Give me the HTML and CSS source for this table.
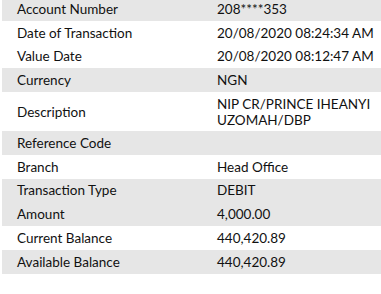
FILE: index.html
```html
<!DOCTYPE html>
<html>
<head>
<meta charset="utf-8">
<link rel="stylesheet" href="styles.css">
</head>
<body>
<div class="details">
  <div class="row shade"><div class="label">Account Number</div><div class="value">208****353</div></div>
  <div class="row"><div class="label">Date of Transaction</div><div class="value">20/08/2020 08:24:34 AM</div></div>
  <div class="row"><div class="label">Value Date</div><div class="value">20/08/2020 08:12:47 AM</div></div>
  <div class="row shade"><div class="label">Currency</div><div class="value">NGN</div></div>
  <div class="row tall"><div class="label">Description</div><div class="value wrap">NIP CR/PRINCE IHEANYI UZOMAH/DBP</div></div>
  <div class="row shade"><div class="label">Reference Code</div><div class="value"></div></div>
  <div class="row"><div class="label">Branch</div><div class="value">Head Office</div></div>
  <div class="row shade"><div class="label">Transaction Type</div><div class="value">DEBIT</div></div>
  <div class="row shade"><div class="label">Amount</div><div class="value">4,000.00</div></div>
  <div class="row"><div class="label">Current Balance</div><div class="value">440,420.89</div></div>
  <div class="row shade"><div class="label">Available Balance</div><div class="value">440,420.89</div></div>
</div>
</body>
</html>
```
FILE: styles.css
```css
html, body {
  margin: 0;
  padding: 0;
  background: #ffffff;
}
body {
  font-family: Lato, "Open Sans", sans-serif;
  font-size: 13.5px;
  color: #111111;
  overflow: hidden;
}
.details {
  margin-top: -3px;
  margin-left: 2px;
  display: flex;
  flex-direction: column;
}
.row {
  display: grid;
  grid-template-columns: 215px 1fr;
  height: 23.75px;
  align-items: center;
}
.row.tall {
  height: 39px;
}
.shade {
  background: #e6e6e6;
}
.label {
  padding-left: 15px;
  white-space: nowrap;
}
.value {
  white-space: nowrap;
}
.value.wrap {
  white-space: normal;
  width: 160px;
  line-height: 16px;
}
```
